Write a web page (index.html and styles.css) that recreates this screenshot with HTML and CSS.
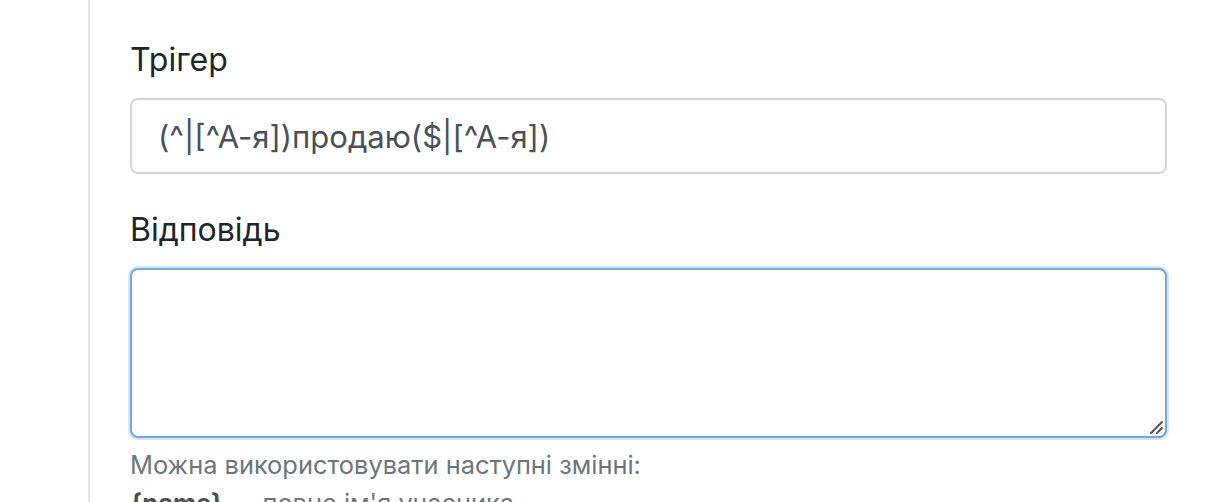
FILE: index.html
```html
<!DOCTYPE html>
<html lang="uk">
<head>
<meta charset="utf-8">
<title>Форма</title>
<link rel="stylesheet" href="styles.css">
</head>
<body>
<div class="page">
  <aside class="sidebar"></aside>
  <main class="content">
    <form class="form">
      <div class="form-group">
        <label class="label" for="trigger">Трігер</label>
        <input class="control" id="trigger" type="text" value="(^|[^А-я])продаю($|[^А-я])">
      </div>
      <div class="form-group">
        <label class="label" for="answer">Відповідь</label>
        <div class="textarea-wrap">
          <textarea class="control textarea" id="answer"></textarea>
          <svg class="grip" width="16" height="16" viewBox="0 0 16 16" aria-hidden="true">
            <path d="M3 14 L14 3 M9 14 L14 9" stroke="#555" stroke-width="2" stroke-linecap="round" fill="none"/>
          </svg>
        </div>
        <div class="help">
          <p>Можна використовувати наступні змінні:</p>
          <p><b>{name}</b> — повне ім'я учасника</p>
        </div>
      </div>
    </form>
  </main>
</div>
</body>
</html>
```
FILE: styles.css
```css
html, body {
  margin: 0;
  padding: 0;
  background: #fff;
}
body {
  font-family: "Inter", "Roboto", "Liberation Sans", sans-serif;
  color: #212529;
}
.page {
  display: flex;
  height: 502px;
  overflow: hidden;
}
.sidebar {
  width: 88px;
  flex: none;
  border-right: 2px solid #e3e3e3;
}
.content {
  flex: 1;
  padding: 36px 57px 0 40px;
}
.form-group {
  margin-bottom: 32px;
}
.label {
  display: block;
  font-size: 32px;
  line-height: 48px;
  margin-bottom: 14px;
}
.control {
  display: block;
  box-sizing: border-box;
  width: 100%;
  font-family: inherit;
  font-size: 31px;
  color: #495057;
  background: #fff;
  border: 2px solid #d3d6d9;
  border-radius: 8px;
  padding: 12px 26px;
  height: 76px;
  outline: none;
}
.textarea-wrap {
  position: relative;
}
.textarea {
  height: 170px;
  resize: none;
  border-color: #72a9de;
  box-shadow: 0 0 0 2px rgba(128, 180, 235, 0.35);
}
.grip {
  position: absolute;
  right: 3px;
  bottom: 3px;
}
.help {
  margin-top: 8px;
  font-size: 25.4px;
  line-height: 38px;
  color: #6c757d;
}
.help p {
  margin: 0;
}
.help b {
  color: #495057;
}
```
